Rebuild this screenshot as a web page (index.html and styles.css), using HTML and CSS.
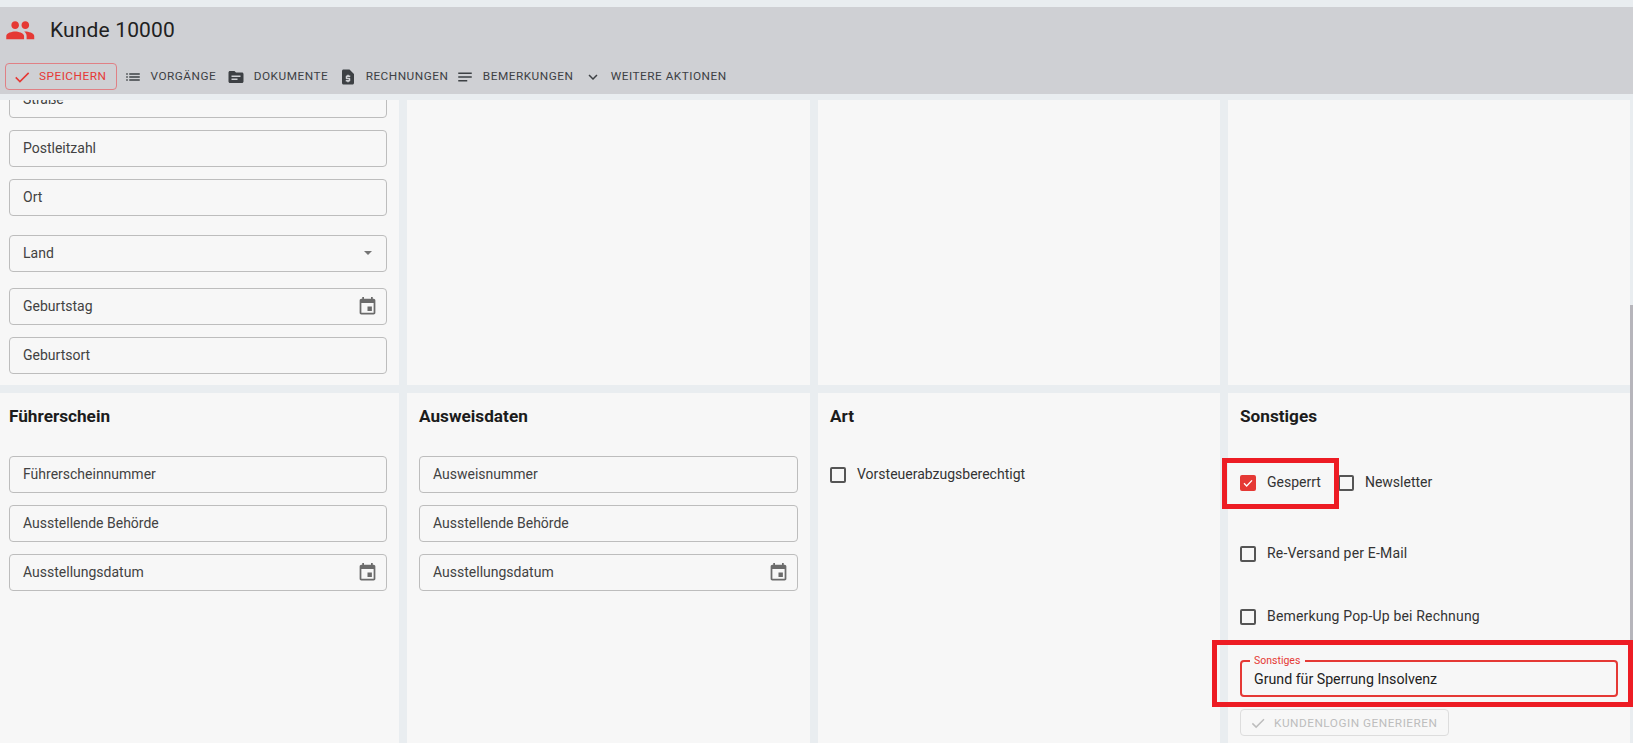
FILE: index.html
```html
<!DOCTYPE html>
<html lang="de">
<head>
<meta charset="utf-8">
<title>Kunde 10000</title>
<link rel="stylesheet" href="styles.css">
</head>
<body>
<div class="page">
  <header class="header">
    <div class="title-row">
      <svg class="title-icon" viewBox="0 0 24 24"><path d="M16 11c1.66 0 2.99-1.34 2.99-3S17.66 5 16 5c-1.66 0-3 1.34-3 3s1.34 3 3 3zm-8 0c1.66 0 2.99-1.34 2.99-3S9.66 5 8 5C6.34 5 5 6.34 5 8s1.34 3 3 3zm0 2c-2.33 0-7 1.17-7 3.5V19h14v-2.5c0-2.33-4.67-3.5-7-3.5zm8 0c-.29 0-.62.02-.97.05 1.16.84 1.97 1.97 1.97 3.45V19h6v-2.5c0-2.33-4.67-3.5-7-3.5z"/></svg>
      <h1 class="title">Kunde 10000</h1>
    </div>
    <div class="toolbar">
      <button class="tool tool-save"><svg class="thin-check" viewBox="0 0 24 24"><path d="M4.5 12.5L9.5 17.5L20 7"/></svg>Speichern</button>
      <button class="tool"><svg viewBox="0 0 24 24"><path d="M3 13h2v-2H3v2zm0 4h2v-2H3v2zm0-8h2V7H3v2zm4 4h14v-2H7v2zm0 4h14v-2H7v2zM7 7v2h14V7H7z"/></svg>Vorgänge</button>
      <button class="tool"><svg viewBox="0 0 24 24"><path d="M20 6h-8l-2-2H4c-1.1 0-1.99.9-1.99 2L2 18c0 1.1.9 2 2 2h16c1.1 0 2-.9 2-2V8c0-1.1-.9-2-2-2zm-6 10H6v-2h8v2zm4-4H6v-2h12v2z"/></svg>Dokumente</button>
      <button class="tool tool-tight"><svg viewBox="0 0 24 24"><path d="M14 2H6c-1.1 0-1.99.9-1.99 2L4 20c0 1.1.89 2 1.99 2H18c1.1 0 2-.9 2-2V8l-6-6zm1 10h-4v1h3c.55 0 1 .45 1 1v3c0 .55-.45 1-1 1h-1v1h-2v-1H9v-2h4v-1h-3c-.55 0-1-.45-1-1v-3c0-.55.45-1 1-1h1V9h2v1h2v2z"/></svg>Rechnungen</button>
      <button class="tool"><svg viewBox="0 0 24 24"><path d="M3 18h12v-2H3v2zM3 6v2h18V6H3zm0 7h18v-2H3v2z"/></svg>Bemerkungen</button>
      <button class="tool"><svg viewBox="0 0 24 24"><path d="M16.59 8.59L12 13.17 7.41 8.59 6 10l6 6 6-6z"/></svg>Weitere Aktionen</button>
    </div>
  </header>

  <main class="grid">
    <section class="panel panel-top">
      <div class="stack stack-scrolled">
        <div class="field">Straße</div>
        <div class="field">Postleitzahl</div>
        <div class="field">Ort</div>
        <div class="field f-land">Land<span class="caret"></span></div>
        <div class="field f-gebtag">Geburtstag<svg class="cal" viewBox="0 0 24 24"><path d="M17 12h-5v5h5v-5zM16 1v2H8V1H6v2H5c-1.11 0-1.99.9-1.99 2L3 19c0 1.1.89 2 2 2h14c1.1 0 2-.9 2-2V5c0-1.1-.9-2-2-2h-1V1h-2zm3 18H5V8h14v11z"/></svg></div>
        <div class="field">Geburtsort</div>
      </div>
    </section>
    <section class="panel panel-top"></section>
    <section class="panel panel-top"></section>
    <section class="panel panel-top"></section>

    <section class="panel panel-bottom">
      <h2 class="heading">Führerschein</h2>
      <div class="stack">
        <div class="field">Führerscheinnummer</div>
        <div class="field">Ausstellende Behörde</div>
        <div class="field">Ausstellungsdatum<svg class="cal" viewBox="0 0 24 24"><path d="M17 12h-5v5h5v-5zM16 1v2H8V1H6v2H5c-1.11 0-1.99.9-1.99 2L3 19c0 1.1.89 2 2 2h14c1.1 0 2-.9 2-2V5c0-1.1-.9-2-2-2h-1V1h-2zm3 18H5V8h14v11z"/></svg></div>
      </div>
    </section>
    <section class="panel panel-bottom">
      <h2 class="heading">Ausweisdaten</h2>
      <div class="stack">
        <div class="field">Ausweisnummer</div>
        <div class="field">Ausstellende Behörde</div>
        <div class="field">Ausstellungsdatum<svg class="cal" viewBox="0 0 24 24"><path d="M17 12h-5v5h5v-5zM16 1v2H8V1H6v2H5c-1.11 0-1.99.9-1.99 2L3 19c0 1.1.89 2 2 2h14c1.1 0 2-.9 2-2V5c0-1.1-.9-2-2-2h-1V1h-2zm3 18H5V8h14v11z"/></svg></div>
      </div>
    </section>
    <section class="panel panel-bottom">
      <h2 class="heading">Art</h2>
      <div class="art-row"><label class="check"><span class="box"></span>Vorsteuerabzugsberechtigt</label></div>
    </section>
    <section class="panel panel-bottom">
      <h2 class="heading">Sonstiges</h2>
      <div class="misc-row misc-row-first">
        <label class="check"><span class="box box-on"><svg viewBox="0 0 24 24"><path d="M6 12.5L10 16.5L18 8"/></svg></span>Gesperrt</label>
        <label class="check check-news"><span class="box"></span>Newsletter</label>
      </div>
      <div class="misc-row misc-row-second"><label class="check"><span class="box"></span>Re-Versand per E-Mail</label></div>
      <div class="misc-row misc-row-third"><label class="check"><span class="box"></span>Bemerkung Pop-Up bei Rechnung</label></div>
      <fieldset class="outlined">
        <legend>Sonstiges</legend>
        Grund für Sperrung Insolvenz
      </fieldset>
      <button class="login"><svg class="thin-check" viewBox="0 0 24 24"><path d="M4.5 12.5L9.5 17.5L20 7"/></svg>Kundenlogin generieren</button>
    </section>
  </main>

  <div class="scroll-thumb"></div>
  <div class="mark mark-gesperrt"></div>
  <div class="mark mark-sonstiges"></div>
</div>
</body>
</html>
```
FILE: styles.css
```css
* { box-sizing: border-box; }
html, body { margin: 0; height: 100%; }
body {
  background: #e9edf0;
  color: #212121;
  font-family: Roboto, "Liberation Sans", Arial, sans-serif;
  overflow: hidden;
}
.page { position: relative; width: 1633px; height: 743px; overflow: hidden; padding-top: 7px; }

.header { height: 87px; background: #cfd0d4; padding-left: 5px; }
.title-row { height: 56px; padding-bottom: 10px; display: flex; align-items: center; }
.title-icon { width: 30.5px; height: 30.5px; fill: #e53935; }
.title { margin: 0 0 0 14.5px; font-size: 21px; font-weight: 400; color: #212121; letter-spacing: .15px; }

.toolbar { display: flex; align-items: center; height: 27px; }
.tool {
  display: flex; align-items: center; height: 27px; padding: 0 0 1px;
  border: 0; background: none;
  font: 400 11.8px Roboto, sans-serif; letter-spacing: .5px;
  text-transform: uppercase; color: #3d4044;
  margin-right: 11px;
}
.tool svg { width: 18px; height: 18px; fill: #3d4044; margin: 1px 8.5px 0 0; }
.tool-tight { margin-right: 8px; }
.tool-save {
  width: 112px; padding: 0 0 1px 6px; color: #e53935;
  border: 1px solid #e08085; border-radius: 4px; margin-right: 7px;
}
.tool-save svg.thin-check { stroke: #e53935; width: 20px; height: 20px; margin-right: 7px; }
.thin-check { fill: none; stroke-width: 1.9; }
.tool svg.thin-check { fill: none; }

.grid {
  display: grid;
  grid-template-columns: 399px 403px 402px 402px;
  grid-template-rows: 285px 1fr;
  column-gap: 8px; row-gap: 8px;
  margin-top: 6px;
  height: 643px;
}
.panel { background: #f7f7f7; overflow: hidden; padding: 0 12px 0 9px; }
.panel-bottom { padding-top: 14px; }
.panel-bottom:nth-child(n+6) { padding-left: 12px; padding-right: 12px; }

.heading { margin: 0 0 31px; font-size: 17.2px; line-height: 18px; font-weight: 700; color: #1c1c1c; }
.stack { display: flex; flex-direction: column; gap: 12.5px; }
.stack-scrolled { margin-top: -19px; }
.f-land { margin-top: 7px; }
.f-gebtag { margin-top: 4px; }

.field {
  display: flex; align-items: center; justify-content: space-between;
  height: 36.5px; flex: none;
  padding: 0 8px 0 13px;
  border: 1px solid #bdbdbd; border-radius: 4px;
  font-size: 14px; color: #424242;
}
.caret { width: 0; height: 0; border: 4px solid transparent; border-top-color: #757575; border-bottom: 0; margin-right: 6px; }
.cal { width: 21px; height: 21px; fill: #6b6b6b; }

.check { display: inline-flex; align-items: center; height: 24px; font-size: 14px; color: #333; }
.box { width: 16px; height: 16px; margin-top: 2px; border: 2px solid #555; border-radius: 2px; margin-right: 11px; flex: none; display: block; }
.box-on { background: #e53935; border-color: #e53935; }
.box-on svg { display: block; width: 16px; height: 16px; margin: -2px; fill: none; stroke: #fff; stroke-width: 2; }

.art-row { padding-top: 6px; }
.misc-row { display: flex; height: 24px; }
.misc-row-first { margin-top: 45px; }
.check-news { margin-left: 17px; }
.misc-row-second { margin-top: 47px; letter-spacing: .18px; }
.misc-row-third { margin-top: 39px; letter-spacing: .18px; }

.outlined {
  margin: 27px 0 0; padding: 0 12px; height: 42px; width: 378px; min-width: 0;
  border: 2px solid #e53935; border-radius: 4px;
  font-size: 14.2px; color: #212121; line-height: 24px;
}
.outlined legend { padding: 0 5px 0 4px; margin-left: -4px; font-size: 10.5px; line-height: 12px; color: #e53935; }

.login {
  display: flex; align-items: center; margin-top: 12px; width: 209px; height: 27px; padding: 0 0 0 8px;
  background: none; border: 1px solid #ddd; border-radius: 4px;
  font: 400 11.8px Roboto, sans-serif; letter-spacing: .5px; text-transform: uppercase; color: #bdbdbd;
}
.login svg.thin-check { width: 18px; height: 18px; stroke: #bdbdbd; margin-right: 7px; }

.scroll-thumb { position: absolute; left: 1630px; top: 305px; width: 3px; height: 375px; background: #b6b5bb; }
.mark { position: absolute; border: 5px solid #ed1c24; }
.mark-gesperrt { left: 1222px; top: 458px; width: 117px; height: 51px; }
.mark-sonstiges { left: 1212px; top: 640px; width: 421px; height: 67px; }
```
